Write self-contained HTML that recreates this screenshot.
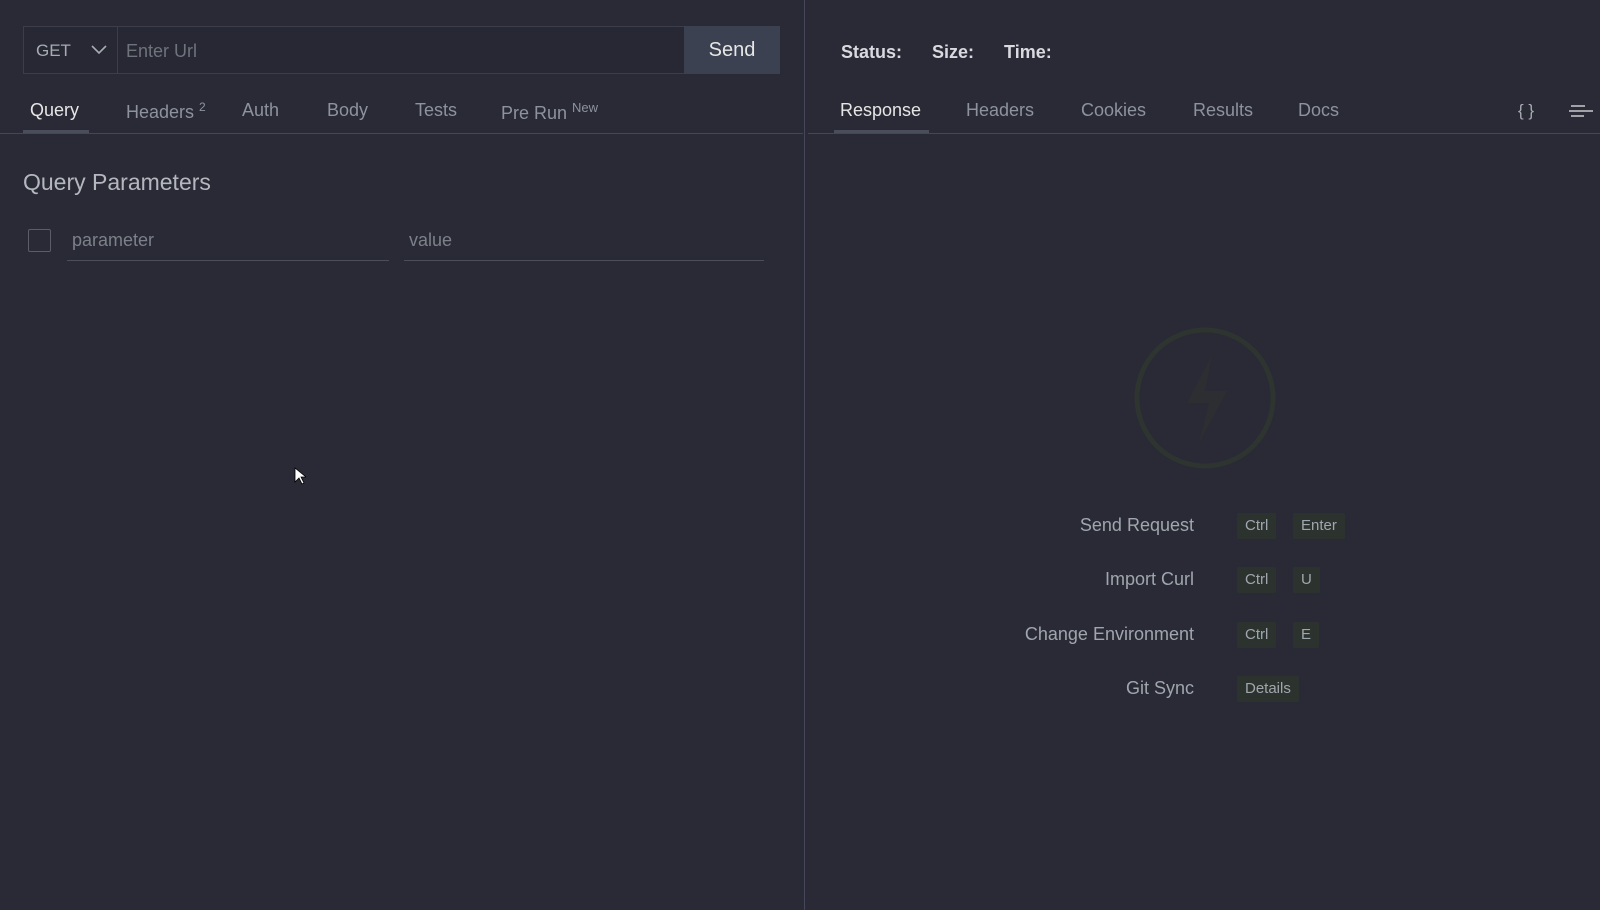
<!DOCTYPE html>
<html><head><meta charset="utf-8"><style>
*{box-sizing:border-box;margin:0;padding:0}
body{width:1600px;height:910px;background:#292a35;font-family:"Liberation Sans",sans-serif;color:#9aa0a8;position:relative;overflow:hidden}
.a{position:absolute;white-space:nowrap}
.url{left:23px;top:26px;width:757px;height:48px;border:1px solid #3a3d4c;background:#272833}
.get{left:0;top:0;width:94px;height:46px;border-right:1px solid #3a3d4c}
.send{left:684px;top:26px;width:96px;height:48px;background:#3b4150;color:#e6e6e6;font-size:20px;text-align:center;line-height:48px}
.tab{top:100px;font-size:18px;color:#8d939c}
.kb{background:#2c332f;color:#a0a6ad;font-size:15px;height:26px;line-height:26px;padding:0 8px;border-radius:2px}
.lbl{font-size:18px;color:#a0a6ad;text-align:right;width:300px}
</style></head><body>
<div class="a url"><div class="a get"><span class="a" style="left:12px;top:14px;font-size:17px;color:#a7abb2">GET</span>
<svg class="a" style="left:67px;top:18px" width="16" height="10"><path d="M1 1l7 7 7-7" stroke="#a7abb2" stroke-width="1.6" fill="none"/></svg></div>
<span class="a" style="left:102px;top:14px;font-size:18px;color:#6e737c">Enter Url</span></div>
<div class="a send">Send</div>
<div class="a" style="left:804px;top:0;width:1px;height:910px;background:#44475a"></div>
<div class="a tab" style="left:30px;color:#e6e6e6">Query</div>
<div class="a" style="left:23px;top:130px;width:66px;height:3px;background:#4a4d5a"></div>
<div class="a tab" style="left:126px">Headers <sup style="font-size:12px">2</sup></div>
<div class="a tab" style="left:242px">Auth</div>
<div class="a tab" style="left:327px">Body</div>
<div class="a tab" style="left:415px">Tests</div>
<div class="a tab" style="left:501px">Pre Run <sup style="font-size:13px">New</sup></div>
<div class="a" style="left:0;top:133px;width:803px;height:1px;background:#44475a"></div>
<div class="a" style="left:23px;top:169px;font-size:23px;color:#b4b8be">Query Parameters</div>
<div class="a" style="left:28px;top:229px;width:23px;height:23px;border:1px solid #5a5d66;border-radius:2px"></div>
<div class="a" style="left:72px;top:230px;font-size:18px;color:#7c8089">parameter</div>
<div class="a" style="left:67px;top:260px;width:322px;height:1px;background:#4a4d5a"></div>
<div class="a" style="left:409px;top:230px;font-size:18px;color:#7c8089">value</div>
<div class="a" style="left:404px;top:260px;width:360px;height:1px;background:#4a4d5a"></div>
<svg class="a" style="left:294px;top:467px" width="12" height="18"><path d="M1 1v14l4-4 3 6 2-1-3-6h5z" fill="#fff" stroke="#000" stroke-width=".8"/></svg>
<div class="a" style="left:841px;top:42px;font-size:18px;font-weight:bold;color:#d8dadf">Status:&nbsp;&nbsp;&nbsp;&nbsp;&nbsp; Size:&nbsp;&nbsp;&nbsp;&nbsp;&nbsp; Time:</div>
<div class="a tab" style="left:840px;color:#e6e6e6">Response</div>
<div class="a" style="left:834px;top:130px;width:95px;height:3px;background:#4a4d5a"></div>
<div class="a tab" style="left:966px">Headers</div>
<div class="a tab" style="left:1081px">Cookies</div>
<div class="a tab" style="left:1193px">Results</div>
<div class="a tab" style="left:1298px">Docs</div>
<div class="a" style="left:1518px;top:101px;font-size:17px;color:#a7abb2">{ }</div>
<svg class="a" style="left:1568px;top:104px" width="26" height="14"><path d="M3 2h14M1 7h24M3 12h13" stroke="#c8cacf" stroke-width="1.6"/></svg>
<div class="a" style="left:808px;top:133px;width:792px;height:1px;background:#44475a"></div>
<svg class="a" style="left:1132px;top:325px" width="146" height="146"><circle cx="73" cy="73" r="68" fill="none" stroke="#2e342f" stroke-width="5"/><path d="M80 30L55 78h22l-10 40 28-52H73z" fill="#2c2e31"/></svg>
<div class="a lbl" style="left:894px;top:515px">Send Request</div>
<div class="a lbl" style="left:894px;top:569px">Import Curl</div>
<div class="a lbl" style="left:894px;top:624px">Change Environment</div>
<div class="a lbl" style="left:894px;top:678px">Git Sync</div>
<div class="a kb" style="left:1237px;top:513px">Ctrl</div><div class="a kb" style="left:1293px;top:513px">Enter</div>
<div class="a kb" style="left:1237px;top:567px">Ctrl</div><div class="a kb" style="left:1293px;top:567px">U</div>
<div class="a kb" style="left:1237px;top:622px">Ctrl</div><div class="a kb" style="left:1293px;top:622px">E</div>
<div class="a kb" style="left:1237px;top:676px">Details</div>
</body></html>
